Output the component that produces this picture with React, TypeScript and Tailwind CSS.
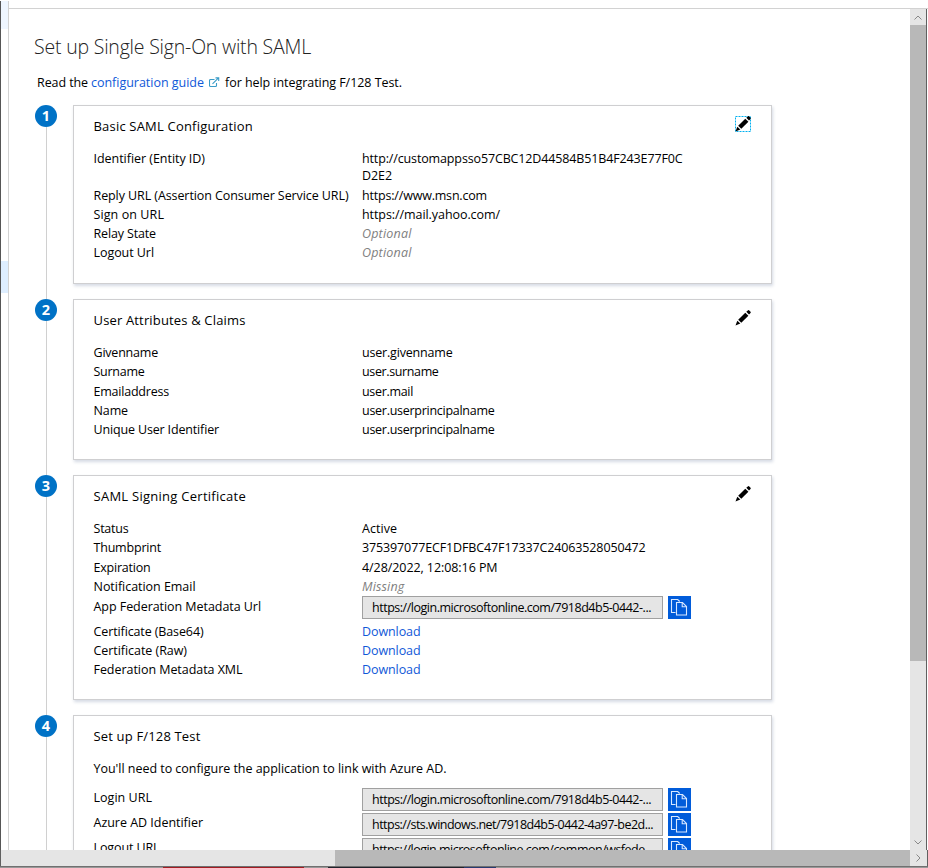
import { useLayoutEffect, useRef, useState } from 'react';
import type { ReactNode } from 'react';

type FitProps = { w: number; text: string; className?: string };

// Adjusts tracking so that the label occupies the given width.
function Fit({ w, text, className = '' }: FitProps) {
  const ref = useRef<HTMLSpanElement>(null);
  const [spacing, setSpacing] = useState(0);
  useLayoutEffect(() => {
    const el = ref.current;
    if (!el) return;
    el.style.letterSpacing = '0px';
    const natural = el.getBoundingClientRect().width;
    const next = (w - natural) / text.length;
    el.style.letterSpacing = next + 'px';
    setSpacing(next);
  }, [w, text]);
  return (
    <span ref={ref} className={'inline-block whitespace-nowrap ' + className} style={{ letterSpacing: spacing }}>
      {text}
    </span>
  );
}

function Pencil({ focused = false }: { focused?: boolean }) {
  return (
    <svg width="16" height="16" viewBox="0 0 16 16" className="mt-[10px] mr-5 shrink-0">
      {focused && (
        <rect x="0.5" y="0.5" width="15" height="15" fill="none" stroke="#00b0f0" strokeDasharray="2 1" />
      )}
      <path d="M3.2 9.7 10.3 2.7 13.400 5.700 6.300 12.700Z" fill="#000" />
      <path d="M11.300 1.800 12.800.4q.8-.7 1.500 0l1.200 1.300q.6.6 0 1.200l-1.500 1.600Z" fill="#000" />
      <path d="M2.300 10.700 5.300 13.600.5 15.600Z" fill="#000" />
    </svg>
  );
}

function CopyButton() {
  return (
    <button className="ml-[5px] flex h-[23px] w-[23px] shrink-0 items-center justify-center bg-[#015cda]">
      <svg width="23" height="23" viewBox="0 0 23 23" fill="none" stroke="#d9e8ff" strokeWidth="1.1">
        <path d="M7.5 16.5h-4v-13h6.2l2 2" />
        <path d="M8.5 6.5h6l4 4v8.5h-10z" fill="#015cda" />
        <path d="M14.2 6.5v4.3h4.3" />
      </svg>
    </button>
  );
}

function UrlBox({ text, w }: { text: string; w: number }) {
  return (
    <div className="flex h-[25px] items-start">
      <div className="flex h-[23px] w-[301px] items-center border border-[#a0a0a0] bg-[#e5e5e5] pl-[9px]">
        <Fit text={text} w={w} />
      </div>
      <CopyButton />
    </div>
  );
}

const rowSizes = {
  normal: 'h-[19.25px] leading-[19px]',
  compact: 'h-[19px] leading-[19px]',
  tall: 'h-[25px] leading-[19px]',
  taller: 'h-[26px] leading-[21px]',
};

function Row({
  label, w, children, size = 'normal',
}: {
  label: string; w: number; children: ReactNode; size?: keyof typeof rowSizes;
}) {
  return (
    <div className={'flex ' + rowSizes[size]}>
      <div className="w-[268.5px] shrink-0">
        <Fit text={label} w={w} />
      </div>
      <div>{children}</div>
    </div>
  );
}

function Step({
  n, title, w, height, edit, last = false, first = false, children,
}: {
  n: number; title: string; w: number; height: string; edit?: ReactNode; last?: boolean; first?: boolean; children: ReactNode;
}) {
  return (
    <section className="flex">
      <div className="mr-4 flex w-[22px] shrink-0 flex-col items-center">
        <div className="flex h-[22px] w-[22px] shrink-0 items-center justify-center rounded-full bg-[#0072c6] pb-px text-[14.5px] leading-[20px] font-bold text-white">
          {n}
        </div>
        <div className="w-px grow bg-[#d0d0d0]" />
      </div>
      <div className={last ? '' : 'pb-[15px]'}>
        <div className={'w-[699px] border border-[#cfcfd1] bg-white shadow-[1px_2px_3px_rgba(70,90,130,0.22)] ' + height}>
          <div className={'flex justify-between pl-[19.5px] ' + (first ? 'h-[42px]' : 'h-[43px]')}>
            <div className="text-[13px] leading-[41px]">
              <Fit text={title} w={w} />
            </div>
            {edit}
          </div>
          <div className="pl-[19.5px]">{children}</div>
        </div>
      </div>
    </section>
  );
}

const muted = 'italic text-[#808080]';
const link = 'text-[#1058d8]';

export default function App() {
  return (
    <div className="flex h-[868px] w-[928px] flex-col overflow-hidden bg-white font-['Open_Sans','Noto_Sans',sans-serif] text-[12.5px] text-black">
      <div className="h-px shrink-0 bg-white" />
      <div className="flex h-[849px] shrink-0 border-l border-[#555]">
        <div className="flex w-[7px] shrink-0 flex-col">
          <div className="h-7 bg-[#eff6ff]" />
          <div className="h-[232px]" />
          <div className="h-8 bg-[#deeeff]" />
        </div>
        <div className="w-px shrink-0 bg-[#d2d2d2]" />
        <div className="flex grow flex-col">
          <div className="h-[8px] shrink-0 border-b border-[#d2d2d2]" />
          <div className="flex h-[841px]">
            <main className="w-[901px] overflow-hidden pl-[26px]">
              <h1 className="-ml-px mt-[23px] h-[31px] text-[19.5px] leading-[30px] font-light text-[#222]">
                <Fit text="Set up Single Sign-On with SAML" w={277} />
              </h1>
              <div className="mt-[9px] flex h-[22px] items-center pl-[2px]">
                <Fit text="Read the" w={51} />
                <Fit text="configuration guide" w={113} className={'ml-[3px] ' + link} />
                <svg width="11" height="11" viewBox="0 0 11 11" className="mr-[5px] mb-[2px] ml-[5px]" fill="none" stroke="#3a9cc8" strokeWidth="1.1">
                  <path d="M5.5 2.500h-4q-1 0-1 1v5q0 1 1 1h5q1 0 1-1V6M3.500 6.800 9 1.400M6.500.9h3.200v3.200" />
                </svg>
                <Fit text="for help integrating F/128 Test." w={177} />
              </div>
              <div className="mt-[11px]">
                <Step first n={1} title="Basic SAML Configuration" w={159.500} height="h-[179px]" edit={<Pencil focused />}>
                  <div className="flex h-[38px] leading-[17px]">
                    <div className="w-[268.5px] shrink-0 pt-[2px]"><Fit text="Identifier (Entity ID)" w={111.500} /></div>
                    <div className="pt-[2px]">
                      <div><Fit text="http://customappsso57CBC12D44584B51B4F243E77F0C" w={320.500} /></div>
                      <div><Fit text="D2E2" w={30} /></div>
                    </div>
                  </div>
                  <Row size="compact" label="Reply URL (Assertion Consumer Service URL)" w={255}><Fit text="https://www.msn.com" w={125} /></Row>
                  <Row size="compact" label="Sign on URL" w={70.500}><Fit text="https://mail.yahoo.com/" w={138} /></Row>
                  <Row size="compact" label="Relay State" w={62.500}><Fit text="Optional" w={49.500} className={muted} /></Row>
                  <Row size="compact" label="Logout Url" w={60.500}><Fit text="Optional" w={49.500} className={muted} /></Row>
                </Step>
                <Step n={2} title="User Attributes & Claims" w={152} height="h-[161px]" edit={<Pencil />}>
                  <Row label="Givenname" w={64.500}><Fit text="user.givenname" w={90.500} /></Row>
                  <Row label="Surname" w={51}><Fit text="user.surname" w={76.500} /></Row>
                  <Row label="Emailaddress" w={75.500}><Fit text="user.mail" w={51} /></Row>
                  <Row label="Name" w={34.500}><Fit text="user.userprincipalname" w={132.500} /></Row>
                  <Row label="Unique User Identifier" w={125.500}><Fit text="user.userprincipalname" w={132.500} /></Row>
                </Step>
                <Step n={3} title="SAML Signing Certificate" w={152.500} height="h-[225px]" edit={<Pencil />}>
                  <Row label="Status" w={35}><Fit text="Active" w={35} /></Row>
                  <Row label="Thumbprint" w={67.500}><Fit text="375397077ECF1DFBC47F17337C24063528050472" w={283.500} /></Row>
                  <Row label="Expiration" w={57}><Fit text="4/28/2022, 12:08:16 PM" w={135.500} /></Row>
                  <Row label="Notification Email" w={102}><Fit text="Missing" w={42.500} className={muted} /></Row>
                  <Row size="taller" label="App Federation Metadata Url" w={167.500}>
                    <UrlBox text="https://login.microsoftonline.com/7918d4b5-0442-..." w={279} />
                  </Row>
                  <Row size="compact" label="Certificate (Base64)" w={110}><Fit text="Download" w={58.500} className={link} /></Row>
                  <Row size="compact" label="Certificate (Raw)" w={93.500}><Fit text="Download" w={58.500} className={link} /></Row>
                  <Row size="compact" label="Federation Metadata XML" w={149}><Fit text="Download" w={58.500} className={link} /></Row>
                </Step>
                <Step n={4} title="Set up F/128 Test" w={107} height="h-[200px]" last>
                  <div className="h-[29px] leading-[20px]"><Fit text="You'll need to configure the application to link with Azure AD." w={353} /></div>
                  <Row size="tall" label="Login URL" w={58.500}><UrlBox text="https://login.microsoftonline.com/7918d4b5-0442-..." w={279} /></Row>
                  <Row size="tall" label="Azure AD Identifier" w={109.500}><UrlBox text="https://sts.windows.net/7918d4b5-0442-4a97-be2d..." w={281} /></Row>
                  <Row size="tall" label="Logout URL" w={66}><UrlBox text="https://login.microsoftonline.com/common/wsfede..." w={281} /></Row>
                </Step>
              </div>
            </main>
            <div className="flex w-4 shrink-0 flex-col bg-[#e5e5e5]">
              <div className="flex h-4 items-center justify-center">
                <svg width="8" height="5" fill="none" stroke="#888"><path d="M.5 4.5 4 1l3.500 3.500" /></svg>
              </div>
              <div className="h-[636px] bg-[#b8b8b8]" />
              <div className="mt-auto flex h-4 items-center justify-center">
                <svg width="8" height="5" fill="none" stroke="#888"><path d="M.5.5 4 4 7.500.5" /></svg>
              </div>
            </div>
            <div className="w-px shrink-0 bg-[#606060]" />
          </div>
        </div>
      </div>
      <div className="flex h-4 shrink-0 border-x border-[#606060] bg-[#e5e5e5]">
        <div className="w-[334px]" />
        <div className="w-[575px] bg-[#b8b8b8]" />
        <div className="flex grow items-center justify-center">
          <svg width="5" height="8" fill="none" stroke="#888"><path d="M.5.5 4 4 .5 7.500" /></svg>
        </div>
      </div>
      <div className="h-px shrink-0 bg-[#707070]" />
      <div className="flex h-px shrink-0 bg-[#999]">
        <div className="ml-[163px] w-[141px] bg-[#a11c22]" />
        <div className="ml-[24px] w-[136px] bg-[#20232c]" />
        <div className="w-8 bg-[#293a70]" />
      </div>
    </div>
  );
}
